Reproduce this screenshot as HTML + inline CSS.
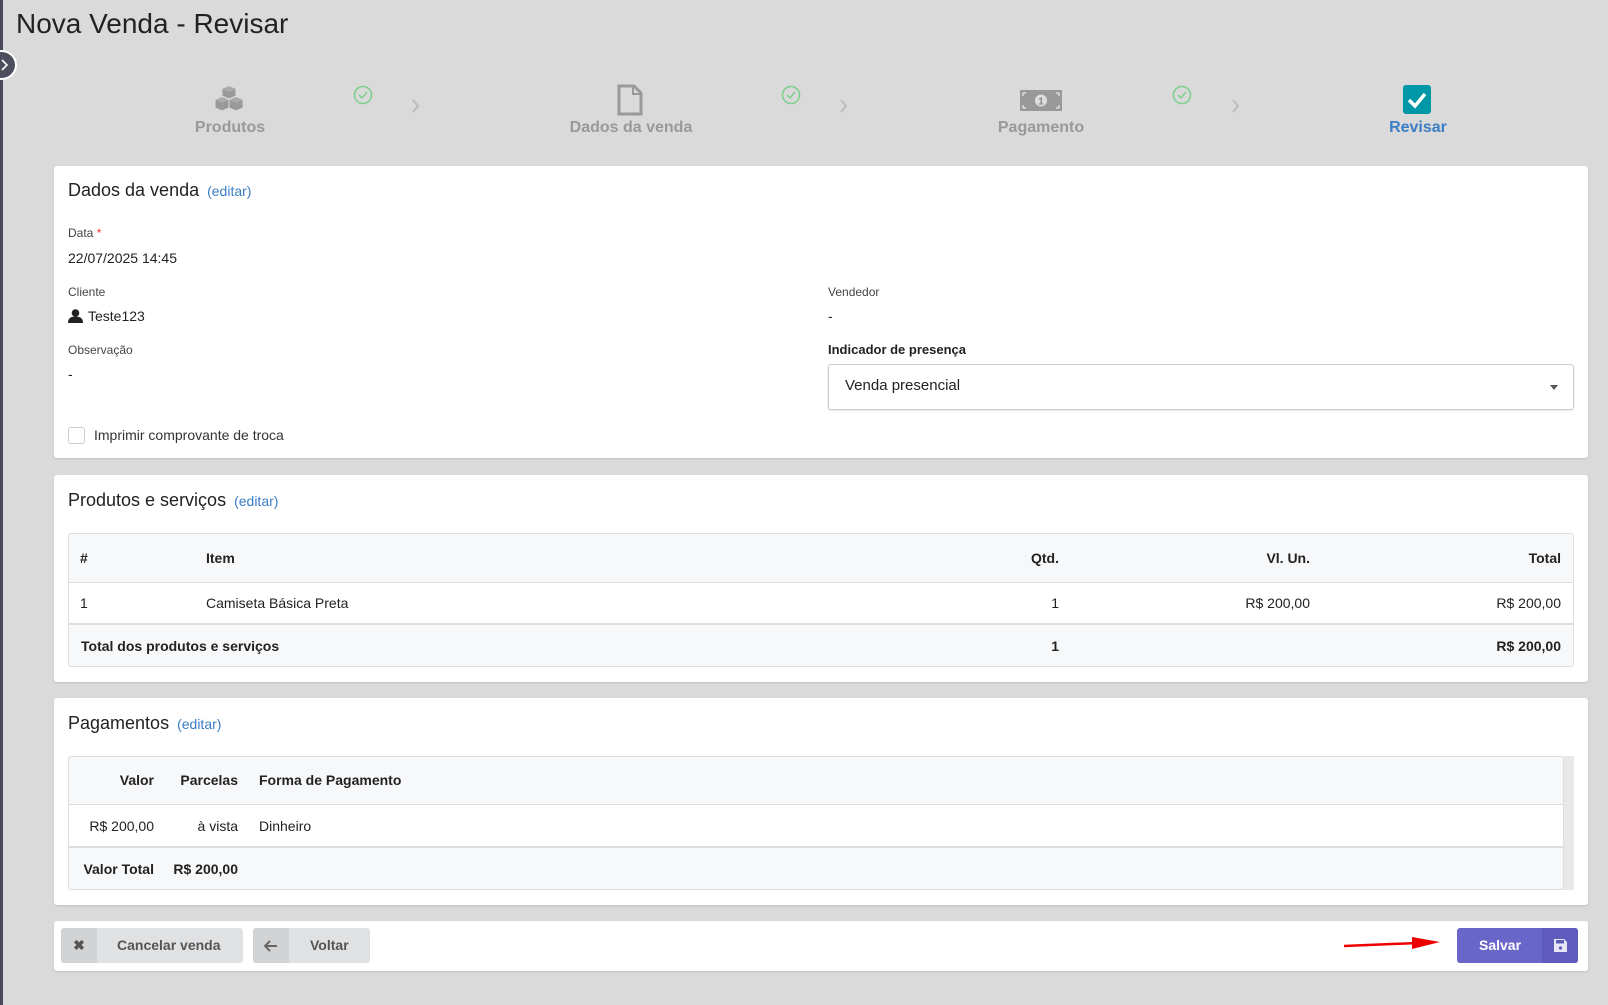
<!DOCTYPE html>
<html><head><meta charset="utf-8"><style>
*{box-sizing:border-box;margin:0;padding:0}
body{width:1608px;height:1005px;background:#dadada;font-family:"Liberation Sans",Arial,sans-serif;color:#222;position:relative;overflow:hidden;font-size:14px}
.a{position:absolute}
.card{position:absolute;left:54px;width:1534px;background:#fff;border-radius:3px;box-shadow:0 1px 2px rgba(0,0,0,.12)}
.h{position:absolute;left:14px;font-size:18px;color:#222}
.h span{font-size:14px;color:#3b7dc4;margin-left:8px}
.lbl{position:absolute;font-size:12px;color:#444}
.val{position:absolute;font-size:14px;color:#222}
.step{position:absolute;text-align:center;font-weight:bold;font-size:16px;color:#999;width:200px}
.tbl{position:absolute;border:1px solid #ddd;border-radius:3px;overflow:hidden}
.row{position:absolute;left:0;right:0}
.btn{position:absolute;height:35px;border-radius:3px;background:#e0e1e3;font-weight:bold;color:#555;font-size:14px}
.btn .ic{position:absolute;left:0;top:0;width:36px;height:35px;background:#d2d3d5;border-radius:3px 0 0 3px;text-align:center;line-height:35px}
</style></head><body>
<div class="a" style="left:0;top:0;width:3px;height:1005px;background:#4a4a5a"></div>
<div class="a" style="left:-14px;top:50px;width:31px;height:30px;border-radius:50%;background:#4d4e5e;border:2px solid #fff"></div>
<svg class="a" style="left:1px;top:58px" width="8" height="14"><path d="M1 2l5 5-5 5" stroke="#fff" stroke-width="1.6" fill="none"/></svg>
<div class="a" style="left:16px;top:8px;font-size:28px;color:#222">Nova Venda - Revisar</div>

<!-- steps -->
<svg class="a" style="left:212px;top:85px" width="34" height="30" viewBox="0 0 34 30">
<g stroke="#dadada" stroke-width="1">
<path d="M17 1l7 3v7l-7 3-7-3V4z" fill="#999"/>
<path d="M10 12l7 3v8l-7 3-7-3v-8z" fill="#999"/>
<path d="M24 12l7 3v8l-7 3-7-3v-8z" fill="#999"/>
</g>
<path d="M17 1l7 3-7 3-7-3z" fill="#aaa"/><path d="M10 12l7 3-7 3-7-3z" fill="#aaa"/><path d="M24 12l7 3-7 3-7-3z" fill="#aaa"/>
</svg>
<div class="step" style="left:130px;top:119px">Produtos</div>
<svg class="a" style="left:617px;top:84px" width="26" height="32"><path d="M2 2h15l7 7v21H2z" fill="none" stroke="#999" stroke-width="3"/><path d="M16 2v8h8" fill="none" stroke="#999" stroke-width="2"/></svg>
<div class="step" style="left:531px;top:119px">Dados da venda</div>
<svg class="a" style="left:1020px;top:90px" width="42" height="21"><rect width="42" height="21" fill="#999"/><circle cx="21" cy="10.5" r="6" fill="#ddd"/><text x="21" y="14.5" font-size="10" font-weight="bold" text-anchor="middle" fill="#888" font-family="Liberation Sans">1</text><path d="M3 3h3M3 3v3M39 3h-3M39 3v3M3 18h3M3 18v-3M39 18h-3M39 18v-3" stroke="#ddd" stroke-width="1.5"/></svg>
<div class="step" style="left:941px;top:119px">Pagamento</div>
<div class="a" style="left:1403px;top:85px;width:28px;height:29px;background:#0097a7;border-radius:3px"></div>
<svg class="a" style="left:1403px;top:85px" width="28" height="29"><path d="M6 15l6 6 10-12" stroke="#fff" stroke-width="3.5" fill="none"/></svg>
<div class="step" style="left:1318px;top:119px;color:#3b7dc4">Revisar</div>
<svg class="a" style="left:352px;top:84px" width="22" height="22"><circle cx="11" cy="11" r="8.5" fill="none" stroke="#7fcf8f" stroke-width="1.6"/><path d="M7 11l3 3 5-6" stroke="#7fcf8f" stroke-width="1.6" fill="none"/></svg>
<svg class="a" style="left:780px;top:84px" width="22" height="22"><circle cx="11" cy="11" r="8.5" fill="none" stroke="#7fcf8f" stroke-width="1.6"/><path d="M7 11l3 3 5-6" stroke="#7fcf8f" stroke-width="1.6" fill="none"/></svg>
<svg class="a" style="left:1171px;top:84px" width="22" height="22"><circle cx="11" cy="11" r="8.5" fill="none" stroke="#7fcf8f" stroke-width="1.6"/><path d="M7 11l3 3 5-6" stroke="#7fcf8f" stroke-width="1.6" fill="none"/></svg>
<svg class="a" style="left:411px;top:98px" width="10" height="16"><path d="M2 2l5 6-5 6" stroke="#bbb" stroke-width="2" fill="none"/></svg>
<svg class="a" style="left:839px;top:98px" width="10" height="16"><path d="M2 2l5 6-5 6" stroke="#bbb" stroke-width="2" fill="none"/></svg>
<svg class="a" style="left:1231px;top:98px" width="10" height="16"><path d="M2 2l5 6-5 6" stroke="#bbb" stroke-width="2" fill="none"/></svg>

<!-- card 1 -->
<div class="card" style="top:166px;height:292px">
<div class="h" style="top:14px">Dados da venda<span>(editar)</span></div>
<div class="lbl" style="left:14px;top:60px">Data <span style="color:#e33">*</span></div>
<div class="val" style="left:14px;top:84px">22/07/2025 14:45</div>
<div class="lbl" style="left:14px;top:119px">Cliente</div>
<svg class="a" style="left:14px;top:143px" width="15" height="14"><circle cx="7.5" cy="4" r="3.8" fill="#222"/><path d="M0 14c0-5 3-6.5 7.5-6.5S15 9 15 14z" fill="#222"/></svg>
<div class="val" style="left:34px;top:142px">Teste123</div>
<div class="lbl" style="left:14px;top:177px">Observação</div>
<div class="val" style="left:14px;top:200px">-</div>
<div class="a" style="left:14px;top:261px;width:17px;height:17px;border:1px solid #ccc;border-radius:3px"></div>
<div class="val" style="left:40px;top:261px;color:#333">Imprimir comprovante de troca</div>
<div class="lbl" style="left:774px;top:119px">Vendedor</div>
<div class="val" style="left:774px;top:142px">-</div>
<div class="lbl" style="left:774px;top:176px;font-weight:bold;color:#222;font-size:13px">Indicador de presença</div>
<div class="a" style="left:774px;top:198px;width:746px;height:46px;border:1px solid #ccc;border-radius:3px;box-shadow:0 1px 2px rgba(0,0,0,.1)"></div>
<div class="val" style="left:791px;top:211px;font-size:15px">Venda presencial</div>
<div class="a" style="left:1496px;top:219px;border:4px solid transparent;border-top:5px solid #555"></div>
</div>

<!-- card 2 -->
<div class="card" style="top:475px;height:207px">
<div class="h" style="top:15px">Produtos e serviços<span>(editar)</span></div>
<div class="tbl" style="left:14px;top:58px;width:1506px;height:134px;background:#f7f8fa">
<div class="row" style="top:0;height:48px;font-weight:bold;line-height:48px">
<span class="a" style="left:11px">#</span><span class="a" style="left:137px">Item</span>
<span class="a" style="right:514px">Qtd.</span><span class="a" style="right:263px">Vl. Un.</span><span class="a" style="right:12px">Total</span></div>
<div class="row" style="top:48px;height:43px;background:#fff;border-top:1px solid #ddd;border-bottom:2px solid #ddd;line-height:41px">
<span class="a" style="left:11px">1</span><span class="a" style="left:137px">Camiseta Básica Preta</span>
<span class="a" style="right:514px">1</span><span class="a" style="right:263px">R$ 200,00</span><span class="a" style="right:12px">R$ 200,00</span></div>
<div class="row" style="top:91px;height:43px;font-weight:bold;line-height:43px">
<span class="a" style="left:12px">Total dos produtos e serviços</span>
<span class="a" style="right:514px">1</span><span class="a" style="right:12px">R$ 200,00</span></div>
</div></div>

<!-- card 3 -->
<div class="card" style="top:698px;height:207px">
<div class="h" style="top:15px">Pagamentos<span>(editar)</span></div>
<div class="a" style="left:1508px;top:58px;width:12px;height:134px;background:#e8e8e8"></div>
<div class="tbl" style="left:14px;top:58px;width:1496px;height:134px;background:#f7f8fa">
<div class="row" style="top:0;height:47px;font-weight:bold;line-height:47px">
<span class="a" style="right:1409px">Valor</span><span class="a" style="right:1325px">Parcelas</span><span class="a" style="left:190px">Forma de Pagamento</span></div>
<div class="row" style="top:47px;height:44px;background:#fff;border-top:1px solid #ddd;border-bottom:2px solid #ddd;line-height:42px">
<span class="a" style="right:1409px">R$ 200,00</span><span class="a" style="right:1325px">à vista</span><span class="a" style="left:190px">Dinheiro</span></div>
<div class="row" style="top:91px;height:43px;font-weight:bold;line-height:43px">
<span class="a" style="right:1409px">Valor Total</span><span class="a" style="right:1325px">R$ 200,00</span></div>
</div></div>

<!-- card 4 -->
<div class="card" style="top:921px;height:50px">
<div class="btn" style="left:7px;top:7px;width:182px"><div class="ic">✖</div><span class="a" style="left:56px;top:9px">Cancelar venda</span></div>
<div class="btn" style="left:199px;top:7px;width:117px"><div class="ic"><svg width="14" height="12" style="margin-top:12px"><path d="M13 6H2M6 1L1 6l5 5" stroke="#666" stroke-width="2" fill="none"/></svg></div><span class="a" style="left:57px;top:9px">Voltar</span></div>
<svg class="a" style="left:1288px;top:15px" width="100" height="20"><path d="M2 10L75 7" stroke="#e00" stroke-width="2.5"/><path d="M70 1L98 6 70 13z" fill="#e00"/></svg>
<div class="btn" style="left:1403px;top:7px;width:121px;background:#6966c9;color:#fff"><span class="a" style="left:22px;top:9px">Salvar</span><div class="ic" style="left:85px;width:36px;background:#5e5bbd;border-radius:0 3px 3px 0"><svg width="13" height="13" style="margin-top:11px"><path d="M0 0h10l3 3v10H0z" fill="#e6e6f5"/><rect x="2" y="1" width="8" height="3.5" fill="#5e5bbd"/><circle cx="6.5" cy="9" r="1.6" fill="#5e5bbd"/></svg></div></div>
</div>
</body></html>
